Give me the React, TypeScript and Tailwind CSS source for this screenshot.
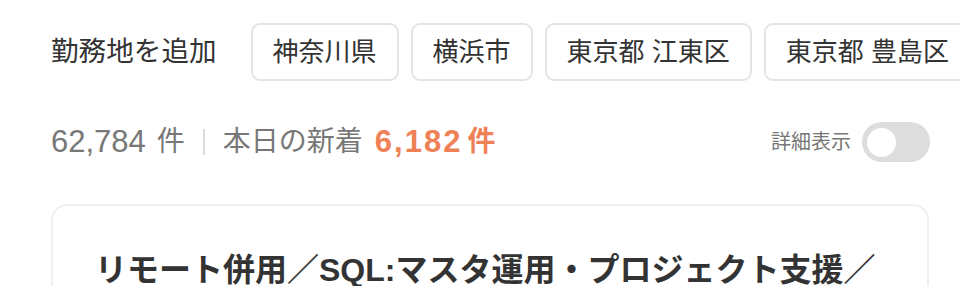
import { useState } from "react";

const areas = ["神奈川県", "横浜市", "東京都 江東区", "東京都 豊島区"];

export default function App() {
  const [detail, setDetail] = useState(false);

  return (
    <div
      className="w-[960px] h-[286px] overflow-hidden bg-white pl-[51px] pt-[23px]"
      style={{ fontFamily: '"Liberation Sans", "Noto Sans CJK JP", sans-serif' }}
    >
      {/* area chips */}
      <div className="flex items-center whitespace-nowrap">
        <span className="text-[27.6px] text-[#333] mr-[34px] shrink-0">勤務地を追加</span>
        <div className="flex gap-[12px]">
          {areas.map((a) => (
            <button
              key={a}
              className="h-[58px] px-[20px] shrink-0 rounded-[9px] border-2 border-[#e4e4e4] bg-white text-[26px] text-[#333] flex items-center"
            >
              {a}
            </button>
          ))}
        </div>
      </div>

      {/* counts */}
      <div className="flex items-center justify-between mt-[41px] pr-[30px] h-[40px]">
        <div className="flex items-center text-[#777] whitespace-nowrap">
          <span className="text-[31px]">62,784</span>
          <span className="text-[28px] ml-[11px]">件</span>
          <span className="inline-block w-[2px] h-[26px] bg-[#dcdcdc] mx-[18px]" />
          <span className="text-[28px]">本日の新着</span>
          <span className="text-[31px] font-bold text-[#ef8157] ml-[12px] tracking-[2px]">6,182</span>
          <span className="text-[28px] font-bold text-[#ef8157] ml-[5px]">件</span>
        </div>
        <div className="flex items-center gap-[11px]">
          <span className="text-[20px] text-[#777]">詳細表示</span>
          <button
            onClick={() => setDetail(!detail)}
            aria-pressed={detail}
            className={`w-[68px] h-[40px] rounded-full flex items-center px-[5px] ${detail ? "bg-[#ef8157] justify-end" : "bg-[#dddddd] justify-start"}`}
          >
            <span className="block w-[29px] h-[29px] rounded-full bg-white" />
          </button>
        </div>
      </div>

      {/* job card */}
      <div className="mt-[42px] mr-[31px] rounded-[16px] border-2 border-[#efefef] bg-white px-[42px] pt-[42px] pb-[40px]">
        <h2 className="text-[32px] font-bold text-[#333] leading-[1.4] whitespace-nowrap">
          リモート併用／SQL:マスタ運用・プロジェクト支援／
        </h2>
      </div>
    </div>
  );
}
